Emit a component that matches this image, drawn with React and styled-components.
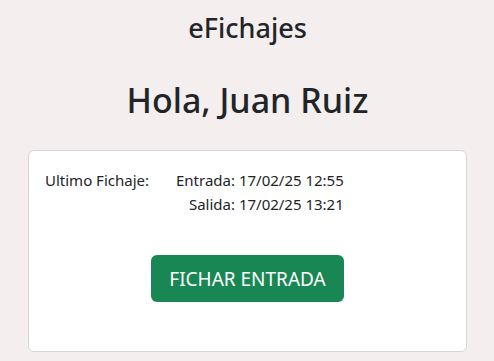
import React from "react";
import styled, { createGlobalStyle } from "styled-components";

const GlobalStyle = createGlobalStyle`
  html, body {
    margin: 0;
    background: #f4eeee;
    font-family: "Noto Sans", "Open Sans", sans-serif;
    color: #212529;
  }
`;

export default function App() {
  return (
    <>
      <GlobalStyle />
      <Page>
        <Brand>eFichajes</Brand>
        <Greeting>Hola, Juan Ruiz</Greeting>
        <Card>
          <Fichaje>
            <Label>Ultimo Fichaje:</Label>
            <Stamp>Entrada: 17/02/25 12:55</Stamp>
            <Stamp>Salida: 17/02/25 13:21</Stamp>
          </Fichaje>
          <Actions>
            <FicharButton>FICHAR ENTRADA</FicharButton>
          </Actions>
        </Card>
      </Page>
    </>
  );
}

const Page = styled.div`
  display: flex;
  flex-direction: column;
  align-items: center;
  padding: 11px 27px 0 28px;
`;

const Brand = styled.div`
  font-size: 27px;
  font-weight: 500;
  line-height: 34px;
`;

const Greeting = styled.h1`
  font-size: 34px;
  font-weight: 500;
  line-height: 40px;
  margin: 35px 0 30px;
`;

const Card = styled.div`
  align-self: stretch;
  background: #fff;
  border: 1px solid #d6d6d6;
  border-radius: 6px;
  padding: 17px 16px 49px;
`;

const Fichaje = styled.div`
  display: grid;
  grid-template-columns: 131px auto;
  justify-content: start;
  font-size: 15px;
  line-height: 24px;
`;

const Label = styled.span`
  grid-row: span 2;
`;

const Stamp = styled.span`
  text-align: right;
`;

const Actions = styled.div`
  display: flex;
  justify-content: center;
  margin-top: 39px;
`;

const FicharButton = styled.button`
  background: #198754;
  color: #fff;
  border: none;
  border-radius: 6px;
  font-family: inherit;
  font-size: 19px;
  padding: 0 18px;
  height: 47px;
  cursor: pointer;
`;
